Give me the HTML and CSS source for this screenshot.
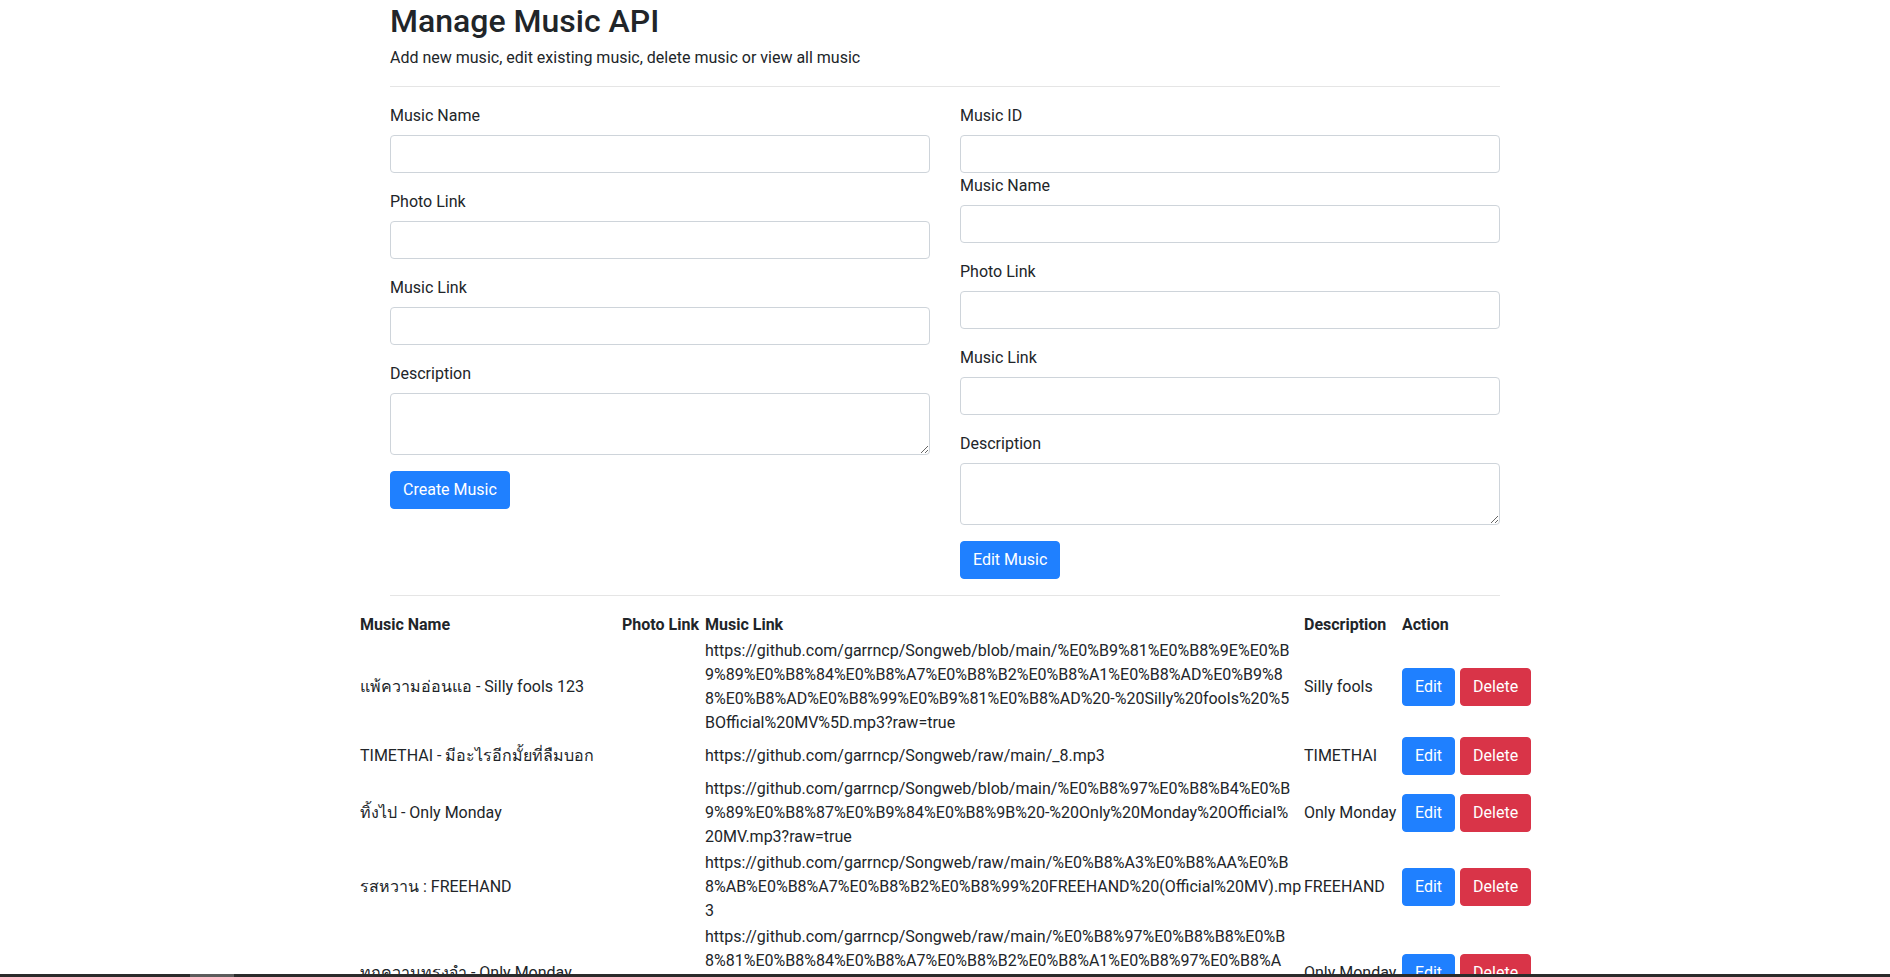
FILE: index.html
```html
<!DOCTYPE html>
<html lang="en">
<head>
<meta charset="utf-8">
<title>Manage Music API</title>
<link rel="stylesheet" href="styles.css">
</head>
<body>
<div class="container">
  <h2 class="title">Manage Music API</h2>
  <p class="subtitle">Add new music, edit existing music, delete music or view all music</p>
  <hr class="divider">
  <div class="row">
    <form class="col">
      <div class="form-group">
        <label class="label">Music Name</label>
        <input class="form-control" type="text">
      </div>
      <div class="form-group">
        <label class="label">Photo Link</label>
        <input class="form-control" type="text">
      </div>
      <div class="form-group">
        <label class="label">Music Link</label>
        <input class="form-control" type="text">
      </div>
      <div class="form-group">
        <label class="label">Description</label>
        <textarea class="form-control textarea" rows="2"></textarea>
      </div>
      <button type="button" class="btn btn-primary">Create Music</button>
    </form>
    <form class="col">
      <div class="form-group form-group-tight">
        <label class="label">Music ID</label>
        <input class="form-control" type="text">
      </div>
      <div class="form-group">
        <label class="label">Music Name</label>
        <input class="form-control" type="text">
      </div>
      <div class="form-group">
        <label class="label">Photo Link</label>
        <input class="form-control" type="text">
      </div>
      <div class="form-group">
        <label class="label">Music Link</label>
        <input class="form-control" type="text">
      </div>
      <div class="form-group">
        <label class="label">Description</label>
        <textarea class="form-control textarea" rows="2"></textarea>
      </div>
      <button type="button" class="btn btn-primary">Edit Music</button>
    </form>
  </div>
  <hr class="divider">
</div>

<table class="music-table">
  <colgroup>
    <col class="c-name"><col class="c-photo"><col class="c-link"><col class="c-desc"><col class="c-action">
  </colgroup>
  <thead>
    <tr><th>Music Name</th><th>Photo Link</th><th>Music Link</th><th>Description</th><th>Action</th></tr>
  </thead>
  <tbody>
    <tr>
      <td>แพ้ความอ่อนแอ - Silly fools 123</td>
      <td></td>
      <td class="url"><span class="ln">https://github.com/garrncp/Songweb/blob/main/%E0%B9%81%E0%B8%9E%E0%B</span><span class="ln">9%89%E0%B8%84%E0%B8%A7%E0%B8%B2%E0%B8%A1%E0%B8%AD%E0%B9%8</span><span class="ln">8%E0%B8%AD%E0%B8%99%E0%B9%81%E0%B8%AD%20-%20Silly%20fools%20%5</span><span class="ln">BOfficial%20MV%5D.mp3?raw=true</span></td>
      <td>Silly fools</td>
      <td><div class="actions"><button type="button" class="btn btn-primary">Edit</button><button type="button" class="btn btn-danger">Delete</button></div></td>
    </tr>
    <tr>
      <td>TIMETHAI - มีอะไรอีกมั้ยที่ลืมบอก</td>
      <td></td>
      <td class="url"><span class="ln">https://github.com/garrncp/Songweb/raw/main/_8.mp3</span></td>
      <td>TIMETHAI</td>
      <td><div class="actions"><button type="button" class="btn btn-primary">Edit</button><button type="button" class="btn btn-danger">Delete</button></div></td>
    </tr>
    <tr>
      <td>ทิ้งไป - Only Monday</td>
      <td></td>
      <td class="url"><span class="ln">https://github.com/garrncp/Songweb/blob/main/%E0%B8%97%E0%B8%B4%E0%B</span><span class="ln">9%89%E0%B8%87%E0%B9%84%E0%B8%9B%20-%20Only%20Monday%20Official%</span><span class="ln">20MV.mp3?raw=true</span></td>
      <td>Only Monday</td>
      <td><div class="actions"><button type="button" class="btn btn-primary">Edit</button><button type="button" class="btn btn-danger">Delete</button></div></td>
    </tr>
    <tr>
      <td>รสหวาน : FREEHAND</td>
      <td></td>
      <td class="url"><span class="ln">https://github.com/garrncp/Songweb/raw/main/%E0%B8%A3%E0%B8%AA%E0%B</span><span class="ln">8%AB%E0%B8%A7%E0%B8%B2%E0%B8%99%20FREEHAND%20(Official%20MV).mp</span><span class="ln">3</span></td>
      <td>FREEHAND</td>
      <td><div class="actions"><button type="button" class="btn btn-primary">Edit</button><button type="button" class="btn btn-danger">Delete</button></div></td>
    </tr>
    <tr>
      <td>ทุกความทรงจำ - Only Monday</td>
      <td></td>
      <td class="url"><span class="ln">https://github.com/garrncp/Songweb/raw/main/%E0%B8%97%E0%B8%B8%E0%B</span><span class="ln">8%81%E0%B8%84%E0%B8%A7%E0%B8%B2%E0%B8%A1%E0%B8%97%E0%B8%A</span><span class="ln">3%E0%B8%87%E0%B8%88%E0%B8%B3%20-%20Only%20Monday%20Official%20M</span><span class="ln">V.mp3?raw=true</span></td>
      <td>Only Monday</td>
      <td><div class="actions"><button type="button" class="btn btn-primary">Edit</button><button type="button" class="btn btn-danger">Delete</button></div></td>
    </tr>
  </tbody>
</table>

<div class="hscroll"><div class="hscroll-thumb"></div></div>
</body>
</html>
```
FILE: styles.css
```css
html, body {
  margin: 0;
  padding: 0;
}

body {
  font-family: Roboto, "Noto Sans", sans-serif;
  font-size: 16px;
  line-height: 1.5;
  color: #212529;
  background: #fff;
  padding-bottom: 200px;
}

.container {
  width: 1110px;
  margin: 0 auto;
}

.title {
  margin: 0 0 6px;
  padding-top: 2px;
  font-size: 32px;
  font-weight: 500;
  line-height: 1.2;
}

.subtitle {
  margin: 0 0 16px;
}

.divider {
  margin: 16px 0;
  border: 0;
  border-top: 1px solid rgba(0, 0, 0, 0.1);
  height: 0;
}

.row {
  display: flex;
  gap: 30px;
}

.col {
  flex: 1 1 0;
  min-width: 0;
  margin: 0;
}

.form-group {
  margin-bottom: 16px;
}

.form-group-tight {
  margin-bottom: 0;
}

.label {
  display: inline-block;
  padding-top: 1px;
  margin-bottom: 7px;
}

.form-control {
  display: block;
  box-sizing: border-box;
  width: 100%;
  height: 38px;
  padding: 6px 12px;
  font-family: inherit;
  font-size: 16px;
  line-height: 1.5;
  color: #495057;
  background: #fff;
  border: 1px solid #ced4da;
  border-radius: 4px;
  margin: 0;
}

.textarea {
  height: 62px;
  resize: vertical;
}

.btn {
  display: inline-block;
  box-sizing: border-box;
  padding: 6px 12px;
  font-family: inherit;
  font-size: 16px;
  line-height: 1.5;
  font-weight: 400;
  color: #fff;
  border: 1px solid transparent;
  border-radius: 4px;
  margin: 0;
  cursor: pointer;
}

.btn-primary {
  background: #1f80ff;
  border-color: #1f80ff;
}

.btn-danger {
  background: #d93448;
  border-color: #d93448;
}

.music-table {
  width: 1172px;
  margin: 0 auto;
  table-layout: fixed;
  border-collapse: collapse;
}

.c-name { width: 262px; }
.c-photo { width: 83px; }
.c-link { width: 599px; }
.c-desc { width: 98px; }
.c-action { width: 130px; }

.music-table th,
.music-table td {
  padding: 1px;
  text-align: left;
  vertical-align: middle;
  white-space: nowrap;
}

.music-table th {
  font-weight: 700;
}

.url .ln {
  display: block;
}

.actions {
  display: flex;
  gap: 5px;
}

.hscroll {
  position: fixed;
  left: 0;
  right: 0;
  bottom: 0;
  height: 3px;
  background: #2b2b2b;
}

.hscroll-thumb {
  position: absolute;
  left: 190px;
  top: 0;
  width: 44px;
  height: 3px;
  background: #5c5c5c;
}
```
